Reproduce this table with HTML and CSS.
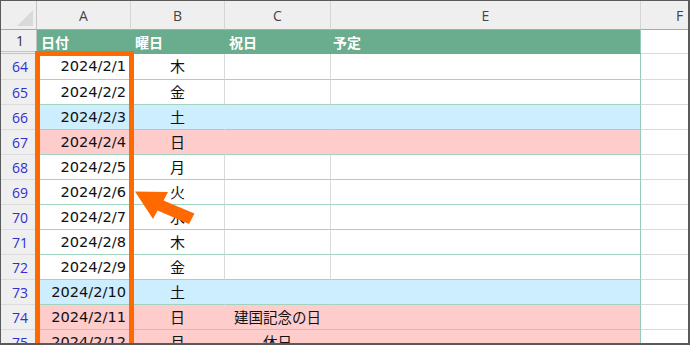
FILE: index.html
```html
<!DOCTYPE html>
<html lang="ja">
<head>
<meta charset="utf-8">
<link rel="stylesheet" href="styles.css">
</head>
<body>
<div class="sheet">
  <div class="row hdr">
    <div class="corner"><svg width="16" height="16" viewBox="0 0 16 16"><polygon points="0,16 16,16 16,0" fill="#d9d9d9"/></svg></div>
    <div class="colh">A</div>
    <div class="colh">B</div>
    <div class="colh">C</div>
    <div class="colh">E</div>
    <div class="colh">F</div>
  </div>
  <div class="row title">
    <div class="rowh one">1</div>
    <div class="th">日付</div>
    <div class="th">曜日</div>
    <div class="th">祝日</div>
    <div class="th end">予定</div>
    <div class="fc"></div>
  </div>
  <div class="row first white">
    <div class="rowh">64</div><div class="c date">2024/2/1</div><div class="c day">木</div><div class="c hol"></div><div class="c plan"></div><div class="fc"></div>
  </div>
  <div class="row white">
    <div class="rowh">65</div><div class="c date">2024/2/2</div><div class="c day">金</div><div class="c hol"></div><div class="c plan"></div><div class="fc"></div>
  </div>
  <div class="row sat">
    <div class="rowh">66</div><div class="c date">2024/2/3</div><div class="c day">土</div><div class="c hol"></div><div class="c plan"></div><div class="fc"></div>
  </div>
  <div class="row sun">
    <div class="rowh">67</div><div class="c date">2024/2/4</div><div class="c day">日</div><div class="c hol"></div><div class="c plan"></div><div class="fc"></div>
  </div>
  <div class="row white">
    <div class="rowh">68</div><div class="c date">2024/2/5</div><div class="c day">月</div><div class="c hol"></div><div class="c plan"></div><div class="fc"></div>
  </div>
  <div class="row white">
    <div class="rowh">69</div><div class="c date">2024/2/6</div><div class="c day">火</div><div class="c hol"></div><div class="c plan"></div><div class="fc"></div>
  </div>
  <div class="row white">
    <div class="rowh">70</div><div class="c date">2024/2/7</div><div class="c day">水</div><div class="c hol"></div><div class="c plan"></div><div class="fc"></div>
  </div>
  <div class="row white">
    <div class="rowh">71</div><div class="c date">2024/2/8</div><div class="c day">木</div><div class="c hol"></div><div class="c plan"></div><div class="fc"></div>
  </div>
  <div class="row white">
    <div class="rowh">72</div><div class="c date">2024/2/9</div><div class="c day">金</div><div class="c hol"></div><div class="c plan"></div><div class="fc"></div>
  </div>
  <div class="row sat">
    <div class="rowh">73</div><div class="c date">2024/2/10</div><div class="c day">土</div><div class="c hol"></div><div class="c plan"></div><div class="fc"></div>
  </div>
  <div class="row sun">
    <div class="rowh">74</div><div class="c date">2024/2/11</div><div class="c day">日</div><div class="c hol">建国記念の日</div><div class="c plan"></div><div class="fc"></div>
  </div>
  <div class="row sun">
    <div class="rowh">75</div><div class="c date">2024/2/12</div><div class="c day">月</div><div class="c hol">休日</div><div class="c plan"></div><div class="fc"></div>
  </div>

  <div class="highlight"></div>
  <svg class="arrow" width="690" height="345" viewBox="0 0 690 345">
    <polygon points="135,191.5 168,192 163.5,200.5 194.5,213.5 189,224 157.5,210.5 153,219" fill="#ff6a00"/>
  </svg>
</div>
</body>
</html>
```

FILE: styles.css
```css
html, body {
  margin: 0;
  padding: 0;
  background: #ffffff;
}

.sheet {
  position: relative;
  width: 690px;
  height: 345px;
  box-sizing: border-box;
  border-style: solid;
  border-color: #5a5a5a;
  border-width: 1px 2px 2px 1px;
  overflow: hidden;
  background: #ffffff;
}

.row {
  display: grid;
  grid-template-columns: 36px 94px 94px 106px 310px 78px;
  height: 25px;
}

.row > div {
  box-sizing: border-box;
  border-right: 1px solid transparent;
  border-bottom: 1px solid transparent;
  display: flex;
  align-items: center;
  overflow: hidden;
  white-space: nowrap;
}

/* column header */
.row.hdr {
  height: 29px;
}

.row.hdr > div {
  background: #efefef;
  border-right-color: #d5d5d5;
  border-bottom-color: #a9a9a9;
}

.corner {
  justify-content: flex-end;
  align-items: flex-end !important;
  padding: 0 3px 3px 0;
  border-right-color: #c4c4c4 !important;
}

.corner svg {
  display: block;
}

.colh {
  justify-content: center;
  font-family: "Open Sans", "Noto Sans", sans-serif;
  font-size: 14px;
  color: #444444;
  padding-top: 1px;
}

/* row header */
.rowh {
  background: #efefef;
  justify-content: center;
  padding-left: 3px;
  font-family: "Open Sans", "Noto Sans", sans-serif;
  font-size: 14px;
  color: #2f2fd2;
  border-right-color: #c4c4c4 !important;
  border-bottom-color: #dcdcdc !important;
}

.rowh.one {
  color: #333333;
  border-bottom: 3px double #c4c4c4 !important;
}

/* title row */
.row.title {
  height: 24px;
}

.th {
  background: #69ad8e;
  color: #ffffff;
  font-family: "Noto Sans CJK JP", sans-serif;
  font-weight: bold;
  font-size: 14px;
  padding-left: 4px;
  border-right-color: #69ad8e !important;
  border-bottom-color: #69ad8e !important;
}

.th.end {
  padding-left: 2px;
  border-right-color: #96cdb6 !important;
}

.fc {
  background: #ffffff;
  border-bottom-color: #dadada !important;
  border-right-color: #dadada !important;
}

/* data rows */
.row.first {
  height: 26px;
}

.c {
  font-family: "Noto Sans CJK JP", sans-serif;
  font-size: 15px;
  color: #111111;
  padding-bottom: 2px;
  border-bottom-color: #a2d3bf !important;
}

.c.date {
  justify-content: flex-end;
  padding-right: 4px;
  font-family: "DejaVu Sans", "Noto Sans CJK JP", sans-serif;
  font-size: 14.6px;
}

.c.day,
.c.hol {
  justify-content: center;
}

.c.hol {
  font-size: 14.5px;
}

.row.white .c {
  background: #ffffff;
  border-right-color: #dadada;
}

.row.sat .c {
  background: #cdeeff;
  border-right-color: #cdeeff;
}

.row.sun .c {
  background: #ffcccc;
  border-right-color: #ffcccc;
}

.row .c.plan {
  border-right-color: #96cdb6;
}

/* overlays */
.highlight {
  position: absolute;
  left: 34px;
  top: 50px;
  width: 99px;
  height: 340px;
  box-sizing: border-box;
  border: 5px solid #ff6a00;
}

.arrow {
  position: absolute;
  left: -1px;
  top: -1px;
}
```
